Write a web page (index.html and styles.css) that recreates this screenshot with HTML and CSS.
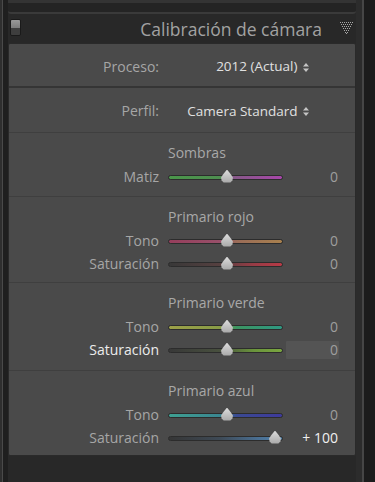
FILE: index.html
```html
<!DOCTYPE html>
<html lang="es">
<head>
<meta charset="utf-8">
<link rel="stylesheet" href="styles.css">
</head>
<body>
<div class="page">
  <div class="edge-left"></div>
  <div class="main">
    <div class="top-strip"></div>
    <div class="header">
      <div class="toggle"><span class="toggle-on"></span><span class="toggle-off"></span></div>
      <div class="title">Calibración de cámara</div>
      <svg class="collapse" width="13" height="12" viewBox="0 0 13 12">
        <g fill="#a8a8a8">
          <rect x="0" y="0" width="1" height="1"/><rect x="2" y="0" width="1" height="1"/><rect x="4" y="0" width="1" height="1"/><rect x="6" y="0" width="1" height="1"/><rect x="8" y="0" width="1" height="1"/><rect x="10" y="0" width="1" height="1"/><rect x="12" y="0" width="1" height="1"/>
          <rect x="1" y="2" width="1" height="1"/><rect x="3" y="2" width="1" height="1"/><rect x="5" y="2" width="1" height="1"/><rect x="7" y="2" width="1" height="1"/><rect x="9" y="2" width="1" height="1"/><rect x="11" y="2" width="1" height="1"/>
          <rect x="2" y="4" width="1" height="1"/><rect x="4" y="4" width="1" height="1"/><rect x="6" y="4" width="1" height="1"/><rect x="8" y="4" width="1" height="1"/><rect x="10" y="4" width="1" height="1"/>
          <rect x="3" y="6" width="1" height="1"/><rect x="5" y="6" width="1" height="1"/><rect x="7" y="6" width="1" height="1"/><rect x="9" y="6" width="1" height="1"/>
          <rect x="4" y="8" width="1" height="1"/><rect x="6" y="8" width="1" height="1"/><rect x="8" y="8" width="1" height="1"/>
          <rect x="5" y="10" width="1" height="1"/><rect x="7" y="10" width="1" height="1"/>
          <rect x="6" y="11" width="1" height="1"/>
        </g>
      </svg>
    </div>
    <div class="panel">
      <div class="popup-row process">
        <div class="label">Proceso:</div>
        <div class="popup-value">2012 (Actual)
          <svg class="updown" width="6" height="9" viewBox="0 0 6 9"><path d="M3 0 L6 3.5 L0 3.5 Z M0 5.5 L6 5.5 L3 9 Z" fill="#c4c4c4"/></svg>
        </div>
      </div>
      <div class="popup-row profile">
        <div class="label">Perfil:</div>
        <div class="popup-value">Camera Standard
          <svg class="updown" width="6" height="9" viewBox="0 0 6 9"><path d="M3 0 L6 3.5 L0 3.5 Z M0 5.5 L6 5.5 L3 9 Z" fill="#c4c4c4"/></svg>
        </div>
      </div>

      <div class="section">
        <div class="section-title">Sombras</div>
        <div class="slider-row">
          <div class="label">Matiz</div>
          <div class="slider"><div class="track track-matiz"></div><div class="thumb thumb-mid"></div></div>
          <div class="value">0</div>
        </div>
      </div>

      <div class="section">
        <div class="section-title">Primario rojo</div>
        <div class="slider-row">
          <div class="label">Tono</div>
          <div class="slider"><div class="track track-red-hue"></div><div class="thumb thumb-mid"></div></div>
          <div class="value">0</div>
        </div>
        <div class="slider-row">
          <div class="label">Saturación</div>
          <div class="slider"><div class="track track-red-sat"></div><div class="thumb thumb-mid"></div></div>
          <div class="value">0</div>
        </div>
      </div>

      <div class="section section-tall">
        <div class="section-title">Primario verde</div>
        <div class="slider-row">
          <div class="label">Tono</div>
          <div class="slider"><div class="track track-green-hue"></div><div class="thumb thumb-mid"></div></div>
          <div class="value">0</div>
        </div>
        <div class="slider-row active">
          <div class="label">Saturación</div>
          <div class="slider"><div class="track track-green-sat"></div><div class="thumb thumb-mid"></div></div>
          <div class="value value-box">0</div>
        </div>
      </div>

      <div class="section section-last">
        <div class="section-title">Primario azul</div>
        <div class="slider-row">
          <div class="label">Tono</div>
          <div class="slider"><div class="track track-blue-hue"></div><div class="thumb thumb-mid"></div></div>
          <div class="value">0</div>
        </div>
        <div class="slider-row">
          <div class="label">Saturación</div>
          <div class="slider"><div class="track track-blue-sat"></div><div class="thumb thumb-max"></div></div>
          <div class="value value-bright">+ 100</div>
        </div>
      </div>
    </div>
    <div class="bottom-strip"></div>
  </div>
  <div class="edge-right"></div>
</div>
</body>
</html>
```
FILE: styles.css
```css
* { box-sizing: border-box; }
html, body { margin: 0; padding: 0; }
body {
  background: #262626;
  font-family: "Open Sans", "Noto Sans", sans-serif;
  width: 375px;
  height: 482px;
  overflow: hidden;
}
.page {
  display: flex;
  height: 482px;
}
.edge-left {
  width: 8px;
  flex: none;
  background: linear-gradient(to right, #2f2f2f 0 2px, #4a4a4a 2px 3px, #1f1f1f 3px 8px);
}
.edge-right {
  width: 19px;
  flex: none;
  background: linear-gradient(to right, #2c2c2c 0 6px, #464646 6px 8px, #1c1c1c 8px 19px);
}
.main {
  width: 348px;
  flex: none;
  display: flex;
  flex-direction: column;
  background: #282828;
}
.top-strip {
  height: 14px;
  flex: none;
  background: #242424;
  border-top: 3px solid #343434;
  border-bottom: 2px solid #3a3a3a;
  border-radius: 0 0 3px 3px;
}
.header {
  height: 29px;
  flex: none;
  display: flex;
  align-items: center;
  padding: 0 3px 0 2px;
  background: #282828;
}
.toggle {
  width: 11px;
  height: 17px;
  margin-right: auto;
  margin-top: -2px;
  display: flex;
  flex-direction: column;
  border: 1px solid #1a1a1a;
  border-radius: 2px;
  overflow: hidden;
}
.toggle-on { flex: 1; background: linear-gradient(#9a9a9a, #7c7c7c); }
.toggle-off { flex: 1; background: #3e3e3e; }
.title {
  font-size: 17.5px;
  color: #a2a2a2;
  line-height: 20px;
}
.collapse {
  margin-left: 18px;
  margin-top: -1px;
}
.panel {
  height: 413px;
  flex: none;
  display: flex;
  flex-direction: column;
  background: #4a4a4a;
  border: 1px solid #2a2a2a;
  border-radius: 2px;
}
.bottom-strip { flex: 1; background: #282828; }

.label {
  text-align: right;
  font-size: 14px;
  color: #a6a6a6;
  white-space: nowrap;
}
.popup-row {
  display: grid;
  grid-template-columns: 150px 141px;
  column-gap: 9px;
  align-items: center;
}
.process {
  height: 44px;
  padding-top: 2px;
  border-bottom: 2px solid #353535;
}
.profile {
  height: 45px;
  padding-top: 1px;
  border-bottom: 1px solid #3f3f3f;
}
.popup-value {
  text-align: right;
  font-size: 13.5px;
  color: #e0e0e0;
  white-space: nowrap;
}
.updown {
  margin-left: 2px;
  vertical-align: -0.5px;
}
.section {
  height: 64px;
  padding-top: 12px;
  border-bottom: 1px solid #3f3f3f;
}
.section + .section { height: 86px; }
.section-tall { height: 88px !important; }
.section-last { flex: 1; border-bottom: none; }
.section-title {
  font-size: 14px;
  line-height: 16px;
  color: #a8a8a8;
  padding-left: 159px;
  margin-bottom: 4px;
}
.slider-row {
  display: grid;
  grid-template-columns: 150px 115px 47px;
  column-gap: 9px;
  align-items: center;
  height: 23px;
}
.slider-row .value {
  margin-left: -6px;
}
.slider {
  position: relative;
  height: 14px;
}
.track {
  position: absolute;
  left: 0;
  right: 0;
  top: 5px;
  height: 5px;
  border-radius: 3px;
  border: 1px solid #2c2c2c;
}
.track-matiz { background: linear-gradient(to right, #4a964a, #4e8e50 45%, #845a86 55%, #a846aa); }
.track-red-hue { background: linear-gradient(to right, #963e5c, #98506a 45%, #9a6c58 60%, #a8804e); }
.track-red-sat { background: linear-gradient(to right, #383838, #564040 45%, #983c46 75%, #b83a46); }
.track-green-hue { background: linear-gradient(to right, #9ca048, #889c46 45%, #3c9462 60%, #2e9882); }
.track-green-sat { background: linear-gradient(to right, #383838, #48503e 45%, #6a943c 75%, #7aa640); }
.track-blue-hue { background: linear-gradient(to right, #3ea092, #3a8690 45%, #3a4a92 60%, #3e3a9c); }
.track-blue-sat { background: linear-gradient(to right, #363636, #3e4a56 45%, #4a7094 80%, #5282aa); }
.thumb {
  position: absolute;
  top: 0;
  width: 12px;
  height: 13px;
  margin-left: -6px;
  background: linear-gradient(#dcdcdc, #a8a8a8);
  clip-path: polygon(50% 0, 80% 35%, 100% 62%, 95% 85%, 78% 100%, 22% 100%, 5% 85%, 0 62%, 20% 35%);
}
.thumb-mid { left: 59px; }
.thumb-max { left: 107px; }
.value {
  text-align: right;
  font-size: 14px;
  color: #9e9e9e;
  padding-right: 1px;
  line-height: 18px;
}
.value-box {
  background: #545454;
  border-radius: 1px;
}
.value-bright { color: #f0f0f0; }
.active .label { color: #ececec; }
```
